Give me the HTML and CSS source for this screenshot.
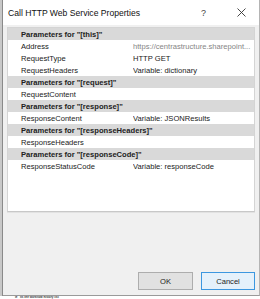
FILE: index.html
```html
<!DOCTYPE html>
<html lang="en">
<head>
    <meta charset="UTF-8">
    <title>Call HTTP Web Service Properties</title>
    <link rel="stylesheet" href="styles.css">
</head>
<body>
    <div class="screen">
        <div class="backdrop"></div>
        <div class="dialog">
            <div class="titlebar">
                <span class="title">Call HTTP Web Service Properties</span>
                <span class="help">?</span>
                <span class="close">
                    <svg width="9" height="9" viewBox="0 0 9 9"><path d="M0.5 0.5L8.5 8.5M8.5 0.5L0.5 8.5" stroke="#333" stroke-width="0.9" fill="none"/></svg>
                </span>
            </div>
            <div class="client">
                <div class="grid">
                    <div class="row group">Parameters for "[this]"</div>
                    <div class="row"><span class="name">Address</span><span class="value muted">https://centrastructure.sharepoint...</span></div>
                    <div class="row"><span class="name">RequestType</span><span class="value">HTTP GET</span></div>
                    <div class="row"><span class="name">RequestHeaders</span><span class="value">Variable: dictionary</span></div>
                    <div class="row group">Parameters for "[request]"</div>
                    <div class="row"><span class="name">RequestContent</span><span class="value"></span></div>
                    <div class="row group">Parameters for "[response]"</div>
                    <div class="row"><span class="name">ResponseContent</span><span class="value">Variable: JSONResults</span></div>
                    <div class="row group">Parameters for "[responseHeaders]"</div>
                    <div class="row"><span class="name">ResponseHeaders</span><span class="value"></span></div>
                    <div class="row group">Parameters for "[responseCode]"</div>
                    <div class="row"><span class="name">ResponseStatusCode</span><span class="value">Variable: responseCode</span></div>
                </div>
                <div class="buttons">
                    <button class="btn">OK</button>
                    <button class="btn default">Cancel</button>
                </div>
            </div>
        </div>
    </div>
    <div class="under"><span>le &nbsp; its the workflow history list</span></div>
</body>
</html>
```

FILE: styles.css
```css
body {
    margin: 0;
    width: 260px;
    height: 299px;
    overflow: hidden;
    background: #ffffff;
    font-family: 'Liberation Sans', Arial, sans-serif;
    color: #1a1a1a;
}
.screen {
    display: flex;
    height: 296px;
}
.backdrop {
    width: 2px;
    background: #c8c8c8;
    border-right: 1px solid #8a8a8a;
}
.dialog {
    width: 256px;
    display: flex;
    flex-direction: column;
    background: #f0f0f0;
    border-right: 1px solid #b4b4b4;
    border-bottom: 1px solid #9a9a9a;
}
.titlebar {
    height: 25px;
    background: #ffffff;
    display: flex;
    align-items: center;
    padding-left: 5px;
    font-size: 8.6px;
    color: #111;
}
.title {
    flex: 1;
}
.help {
    width: 10px;
    margin-right: 26px;
    color: #444;
    font-size: 9px;
}
.close {
    width: 10px;
    margin-right: 12px;
    display: flex;
}
.client {
    flex: 1;
    display: flex;
    flex-direction: column;
    padding: 2px 4px 4px 4px;
}
.grid {
    height: 183px;
    background: #ffffff;
    border: 1px solid #d4d4d4;
    border-bottom-color: #c8c8c8;
    box-shadow: 0 1px 0 #e2e2e2;
    font-size: 7.6px;
}
.row {
    height: 12px;
    display: flex;
    align-items: center;
    padding-left: 13px;
}
.row.group {
    background: #d9d9d9;
    font-weight: bold;
    color: #222;
}
.name {
    width: 112px;
}
.value {
    flex: 1;
    white-space: nowrap;
    overflow: hidden;
}
.value.muted {
    color: #858585;
}
.buttons {
    margin-top: auto;
    margin-bottom: 1px;
    display: flex;
    justify-content: flex-end;
    gap: 8px;
}
.btn {
    width: 55px;
    height: 18px;
    padding: 0;
    font-family: 'Liberation Sans', Arial, sans-serif;
    font-size: 7.6px;
    color: #222;
    background: #e1e1e1;
    border: 1px solid #adadad;
}
.btn.default {
    width: 54px;
    background: #e5f1fb;
    border-color: #3c97e0;
}
.under {
    height: 3px;
    overflow: hidden;
    background: #ffffff;
    font-size: 3px;
    line-height: 3px;
    font-weight: bold;
    color: #333;
    padding-left: 15px;
}
```
